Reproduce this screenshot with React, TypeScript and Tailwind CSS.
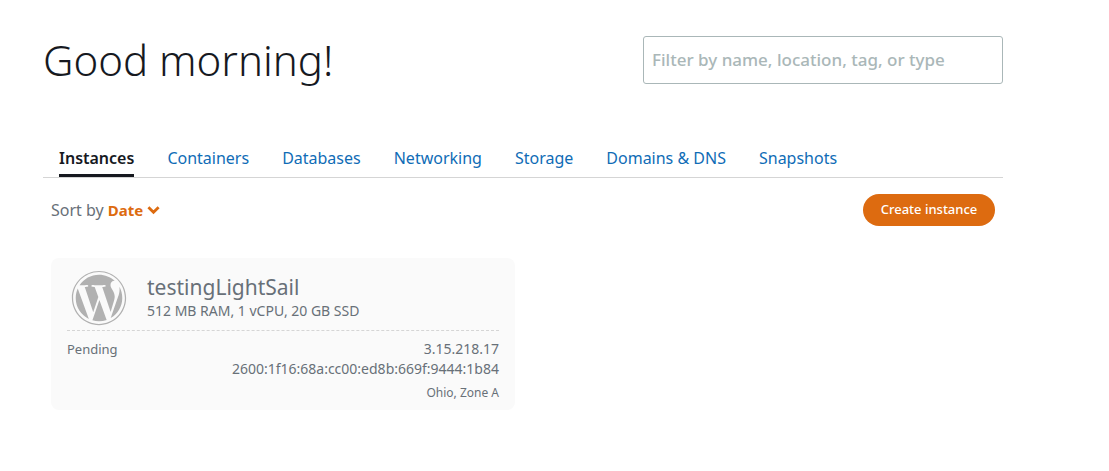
import { FaWordpress } from "react-icons/fa";

const tabs = ["Instances", "Containers", "Databases", "Networking", "Storage", "Domains & DNS", "Snapshots"];

function Header() {
  return (
    <header className="flex items-center justify-between gap-6">
      <h1 className="text-[42px] leading-12 font-light text-[#16191f]">Good morning!</h1>
      <input
        type="search"
        aria-label="Filter resources"
        placeholder="Filter by name, location, tag, or type"
        className="h-12 w-[360px] rounded-[3px] border border-[#aab7b8] bg-white px-2 pb-0.5 text-[17px] font-medium text-[#16191f] placeholder:text-[#aab7b8]"
      />
    </header>
  );
}

function Tabs() {
  return (
    <nav aria-label="Resources" className="mt-14 flex gap-[33px] border-b border-[#d5d5d5] px-4">
      {tabs.map((tab, i) => (
        <a
          key={tab}
          href="#"
          aria-current={i === 0 ? "page" : undefined}
          className={
            i === 0
              ? "border-b-3 border-[#16191f] pt-[3px] pb-px text-base leading-[30px] font-semibold whitespace-nowrap text-[#16191f]"
              : "border-b-3 border-transparent pt-[3px] pb-px text-base leading-[30px] whitespace-nowrap text-[#0f6cb6]"
          }
        >
          {tab}
        </a>
      ))}
    </nav>
  );
}

function Toolbar() {
  return (
    <div className="mt-4 flex items-center justify-between px-2">
      <div className="flex items-center gap-1 text-base text-[#687078]">
        <span>Sort by</span>
        <button type="button" className="flex items-center gap-1 text-[15px] font-bold text-[#dd6b10]">
          Date
          <svg viewBox="0 0 14 10" className="h-[10px] w-[13px]" fill="none" stroke="currentColor" strokeWidth="3" aria-hidden="true">
            <path d="M1.5 2 7 7.5 12.5 2" />
          </svg>
        </button>
      </div>
      <button type="button" className="h-8 w-[132px] rounded-full bg-[#dd6b10] text-[13px] font-medium text-white">
        Create instance
      </button>
    </div>
  );
}

function InstanceCard() {
  return (
    <article className="mt-8 ml-2 max-w-[464px] rounded-lg bg-[#fafafa] px-4 pt-3 pb-[7px] text-sm text-[#687078]">
      <div className="flex h-[61px] items-start gap-5 border-b border-dashed border-[#d5d5d5] pl-1">
        <FaWordpress className="size-14 shrink-0 text-[#b1b1b1]" aria-hidden="true" />
        <div className="pt-[5px]">
          <h2 className="text-[21px] leading-6">testingLightSail</h2>
          <p className="leading-6">512 MB RAM, 1 vCPU, 20 GB SSD</p>
        </div>
      </div>
      <div className="flex justify-between pt-2 leading-5">
        <p className="text-[13px] leading-5">Pending</p>
        <div className="text-right">
          <p>3.15.218.17</p>
          <p>2600:1f16:68a:cc00:ed8b:669f:9444:1b84</p>
          <p className="mt-1 text-xs leading-5">Ohio, Zone A</p>
        </div>
      </div>
    </article>
  );
}

export default function App() {
  return (
    <main className="min-h-screen bg-white pt-9 pr-[106px] pl-[43px] font-['Noto_Sans',sans-serif]">
      <div className="max-w-[960px]">
        <Header />
        <Tabs />
        <Toolbar />
        <InstanceCard />
      </div>
    </main>
  );
}
